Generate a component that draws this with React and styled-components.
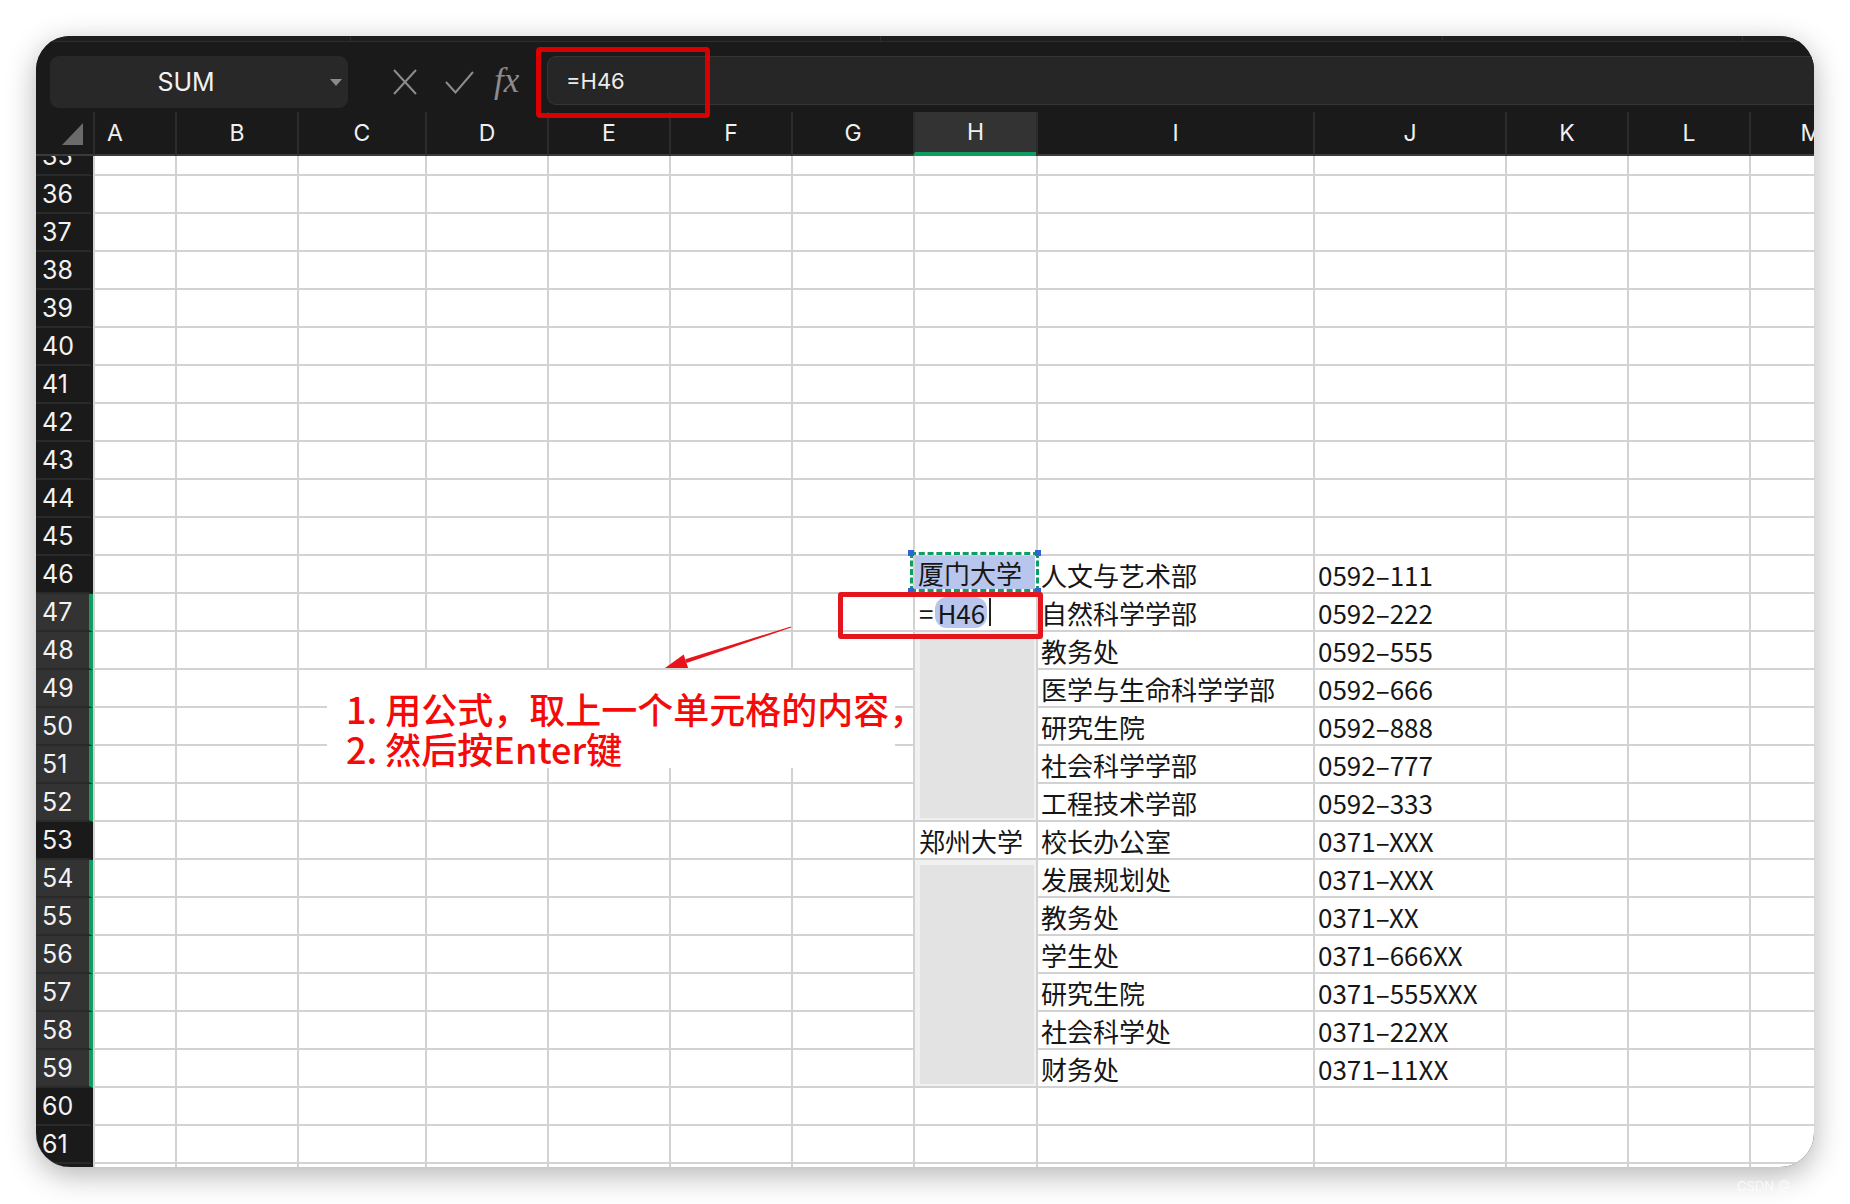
import React from 'react'
import styled, { createGlobalStyle } from 'styled-components'

const GlobalStyle = createGlobalStyle`
  * { box-sizing: border-box; }
  html, body { margin: 0; padding: 0; background: #fff; }
`

const COLS = [
  { key: 'A', w: 82, shift: 40 },
  { key: 'B', w: 122 },
  { key: 'C', w: 128 },
  { key: 'D', w: 122 },
  { key: 'E', w: 122 },
  { key: 'F', w: 122 },
  { key: 'G', w: 122 },
  { key: 'H', w: 123 },
  { key: 'I', w: 277 },
  { key: 'J', w: 192 },
  { key: 'K', w: 122 },
  { key: 'L', w: 122 },
  { key: 'M', w: 122 },
]
const TEMPLATE = `57px ${COLS.map(c => c.w + 'px').join(' ')}`

const DATA = {
  46: ['厦门大学', '人文与艺术部', '0592–111'],
  47: [null, '自然科学学部', '0592–222'],
  48: [null, '教务处', '0592–555'],
  49: [null, '医学与生命科学学部', '0592–666'],
  50: [null, '研究生院', '0592–888'],
  51: [null, '社会科学学部', '0592–777'],
  52: [null, '工程技术学部', '0592–333'],
  53: ['郑州大学', '校长办公室', '0371–XXX'],
  54: [null, '发展规划处', '0371–XXX'],
  55: [null, '教务处', '0371–XX'],
  56: [null, '学生处', '0371–666XX'],
  57: [null, '研究生院', '0371–555XXX'],
  58: [null, '社会科学处', '0371–22XX'],
  59: [null, '财务处', '0371–11XX'],
}

const SELECTED = new Set([47, 48, 49, 50, 51, 52, 54, 55, 56, 57, 58, 59])
const ROWS = Array.from({ length: 28 }, (_, i) => 35 + i)
const GREEN = '#0f9d62'
const GRID = '#d2d2d2'
const UI_FONT = 'Inter, "Liberation Sans", sans-serif'
const CELL_FONT = '"Noto Sans CJK JP", "Noto Sans CJK SC", sans-serif'

const Page = styled.div`
  position: relative;
  width: 1850px;
  height: 1204px;
  padding: 36px 36px 0;
  background: #fff;
  overflow: hidden;
`

const Frame = styled.div`
  width: 1778px;
  height: 1131px;
  border-radius: 34px;
  overflow: hidden;
  background: #1a1a1a;
  box-shadow: 0 8px 30px rgba(0, 0, 0, 0.3);
  display: flex;
  flex-direction: column;
`

const TopStrip = styled.div`
  display: flex;
  flex: none;
  height: 6px;
  background: #1e1e1e;
  border-bottom: 1px solid #2e2e2e;
`

const StripSeg = styled.div`
  flex: none;
  width: ${p => p.$w}px;
  border-right: 1px solid #2e2e2e;
`

const Toolbar = styled.div`
  display: flex;
  align-items: flex-start;
  flex: none;
  height: 70px;
  padding: 14px 0 0 14px;
  background: #1a1a1a;
`

const NameBox = styled.div`
  display: flex;
  align-items: center;
  width: 298px;
  height: 52px;
  border-radius: 9px;
  background: #282828;
`

const NameText = styled.span`
  flex: 1;
  text-align: center;
  padding-right: 8px;
  font: 25px ${UI_FONT};
  color: #f2f2f2;
`

const DropCaret = styled.span`
  width: 0;
  height: 0;
  margin-right: 6px;
  border-left: 6px solid transparent;
  border-right: 6px solid transparent;
  border-top: 7px solid #8a8a8a;
`

const Actions = styled.div`
  display: flex;
  align-items: center;
  width: 199px;
  height: 52px;
`

const ActionIcon = styled.svg`
  flex: none;
  margin-left: ${p => p.$gap}px;
`

const Fx = styled.span`
  margin-left: 20px;
  margin-top: -3px;
  font: italic 35px "Liberation Serif", serif;
  color: #8c8c8c;
`

const FormulaBox = styled.div`
  position: relative;
  flex: 1;
  display: flex;
  align-items: center;
  height: 49px;
  padding-left: 18px;
  border: 1px solid #353535;
  border-right: none;
  border-radius: 9px 0 0 9px;
  background: #262626;
  font: 22px ${UI_FONT};
  color: #ececec;
`

const FormulaMark = styled.div`
  position: absolute;
  left: -12px;
  top: -10px;
  width: 174px;
  height: 71px;
  border: 5px solid #d80000;
  border-radius: 4px;
`

const HeadRow = styled.div`
  display: grid;
  grid-template-columns: ${TEMPLATE};
  flex: none;
  height: 44px;
  background: #1a1a1a;
`

const Corner = styled.div`
  display: flex;
  align-items: flex-end;
  justify-content: flex-end;
  padding: 0 10px 9px 0;
  border-bottom: 2px solid #3c3c3c;
`

const CornerTri = styled.span`
  width: 0;
  height: 0;
  border-left: 21px solid transparent;
  border-bottom: 22px solid #6b6b6b;
`

const ColHead = styled.div`
  display: flex;
  align-items: center;
  justify-content: center;
  padding-right: ${p => p.$shift || 0}px;
  border-left: 2px solid #2c2c2c;
  border-bottom: ${p => (p.$active ? `4px solid ${GREEN}` : '2px solid #3c3c3c')};
  background: ${p => (p.$active ? '#333' : 'transparent')};
  font: 23px ${UI_FONT};
  color: #f0f0f0;
  overflow: hidden;
`

const Sheet = styled.div`
  position: relative;
  flex: 1;
  min-height: 0;
  display: grid;
  grid-template-columns: ${TEMPLATE};
  grid-template-rows: 20px;
  grid-auto-rows: 38px;
  background: #fff;
  overflow: hidden;
`

const RowHead = styled.div`
  display: flex;
  align-items: ${p => (p.$partial ? 'flex-end' : 'center')};
  padding-left: 6px;
  overflow: hidden;
  background: ${p => (p.$sel ? '#333' : '#1a1a1a')};
  border-bottom: 2px solid #2a2a2a;
  border-right: 4px solid ${p => (p.$sel ? GREEN : 'transparent')};
  font: 25px ${UI_FONT};
  color: #f2f2f2;
`

const RowNum = styled.span`
  flex: none;
  height: 36px;
  line-height: 36px;
`

const Cell = styled.div`
  display: flex;
  align-items: ${p => (p.$fill ? 'stretch' : 'center')};
  padding: ${p => (p.$fill ? '0 1px 3px 0' : `0 0 0 ${p.$pad ?? 3}px`)};
  border-left: 2px solid ${GRID};
  border-bottom: 2px solid ${GRID};
  font: 26px ${CELL_FONT};
  color: #161616;
  white-space: nowrap;
  min-width: 0;
`

const RefFill = styled.div`
  flex: 1;
  display: flex;
  align-items: center;
  padding-left: 3px;
  background: #b8c6ee;
`

const Pill = styled.span`
  display: flex;
  align-items: center;
  height: 31px;
  margin-left: 2px;
  padding: 0 2px;
  border-radius: 12px;
  background: #b8c6ee;
`

const TextCaret = styled.span`
  width: 2px;
  height: 28px;
  margin-left: 2px;
  background: #222;
`

const SelectBlock = styled.div`
  grid-row: span ${p => p.$span};
  border-left: 2px solid ${GRID};
  border-bottom: 2px solid ${GRID};
  background: #e3e3e3;
  box-shadow: inset 5px 5px 0 #f1f1f1, inset -2px -2px 0 #f1f1f1;
`

const Ants = styled.div`
  position: absolute;
  left: 874px;
  top: 396px;
  width: 129px;
  height: 40px;
  border: 3px solid #fff;
  &::before {
    content: '';
    position: absolute;
    inset: -3px;
    border: 3px dashed ${GREEN};
  }
`

const Handle = styled.i`
  position: absolute;
  width: 6px;
  height: 6px;
  background: #2f63d6;
  ${p => (p.$top ? 'top: -5px;' : 'bottom: -5px;')}
  ${p => (p.$left ? 'left: -5px;' : 'right: -5px;')}
`

const EditMark = styled.div`
  position: absolute;
  left: 802px;
  top: 436px;
  width: 205px;
  height: 47px;
  border: 5px solid #e5151e;
  border-radius: 3px;
`

const Arrow = styled.svg`
  position: absolute;
  left: 620px;
  top: 460px;
`

const Note = styled.div`
  position: absolute;
  left: 291px;
  top: 514px;
  width: 568px;
  padding: 18px 0 0 19px;
  background: #fff;
  font: 500 36px "Noto Sans CJK SC", sans-serif;
  line-height: 40px;
  color: #f50a0a;
  white-space: nowrap;
`

const Watermark = styled.span`
  position: absolute;
  left: 1737px;
  top: 1178px;
  font: 13px ${UI_FONT};
  color: rgba(255, 255, 255, 0.75);
`

const renderCell = (n, col) => {
  const key = `${n}-${col.key}`
  const row = DATA[n]
  if (col.key === 'H') {
    if (n === 48) return <SelectBlock key={key} $span={5} />
    if (n > 48 && n <= 52) return null
    if (n === 54) return <SelectBlock key={key} $span={6} />
    if (n > 54 && n <= 59) return null
    if (n === 46) return <Cell key={key} $fill><RefFill>{row[0]}</RefFill></Cell>
    if (n === 47) {
      return (
        <Cell key={key} $pad={4}>
          =<Pill>H46</Pill><TextCaret />
        </Cell>
      )
    }
  }
  let text = null
  if (row) {
    if (col.key === 'H') text = row[0]
    if (col.key === 'I') text = row[1]
    if (col.key === 'J') text = row[2]
  }
  return <Cell key={key} $pad={col.key === 'H' ? 4 : 3}>{text}</Cell>
}

export default function App() {
  return (
    <Page>
      <GlobalStyle />
      <Frame>
        <TopStrip>
          <StripSeg $w={315} />
          <StripSeg $w={530} />
          <StripSeg $w={562} />
          <StripSeg $w={300} />
        </TopStrip>

        <Toolbar>
          <NameBox>
            <NameText>SUM</NameText>
            <DropCaret />
          </NameBox>
          <Actions>
            <ActionIcon $gap={45} width="24" height="26" viewBox="0 0 24 26">
              <path d="M1 1 L23 25 M23 1 L1 25" stroke="#8c8c8c" strokeWidth="2" fill="none" />
            </ActionIcon>
            <ActionIcon $gap={28} width="29" height="23" viewBox="0 0 29 23">
              <path d="M1 11 L10.5 21.5 L28 1" stroke="#8c8c8c" strokeWidth="2" fill="none" />
            </ActionIcon>
            <Fx>fx</Fx>
          </Actions>
          <FormulaBox>
            =H46
            <FormulaMark />
          </FormulaBox>
        </Toolbar>

        <HeadRow>
          <Corner><CornerTri /></Corner>
          {COLS.map(c => (
            <ColHead key={c.key} $shift={c.shift} $active={c.key === 'H'}>{c.key}</ColHead>
          ))}
        </HeadRow>

        <Sheet>
          {ROWS.map(n => (
            <React.Fragment key={n}>
              <RowHead $sel={SELECTED.has(n)} $partial={n === 35}>
                <RowNum>{n}</RowNum>
              </RowHead>
              {COLS.map(c => renderCell(n, c))}
            </React.Fragment>
          ))}

          <Ants>
            <Handle $top $left />
            <Handle $top />
            <Handle $left />
            <Handle />
          </Ants>
          <EditMark />
          <Arrow width="140" height="60" viewBox="0 0 140 60">
            <polygon points="134.8,10.5 135.2,11.5 30.5,47.1 29.3,43.3" fill="#e8141b" />
            <polygon points="9,52 32.1,51.9 27.7,38.5" fill="#e8141b" />
          </Arrow>
          <Note>
            1. 用公式，取上一个单元格的内容，<br />
            2. 然后按Enter键
          </Note>
        </Sheet>
      </Frame>
      <Watermark>CSDN @</Watermark>
    </Page>
  )
}
